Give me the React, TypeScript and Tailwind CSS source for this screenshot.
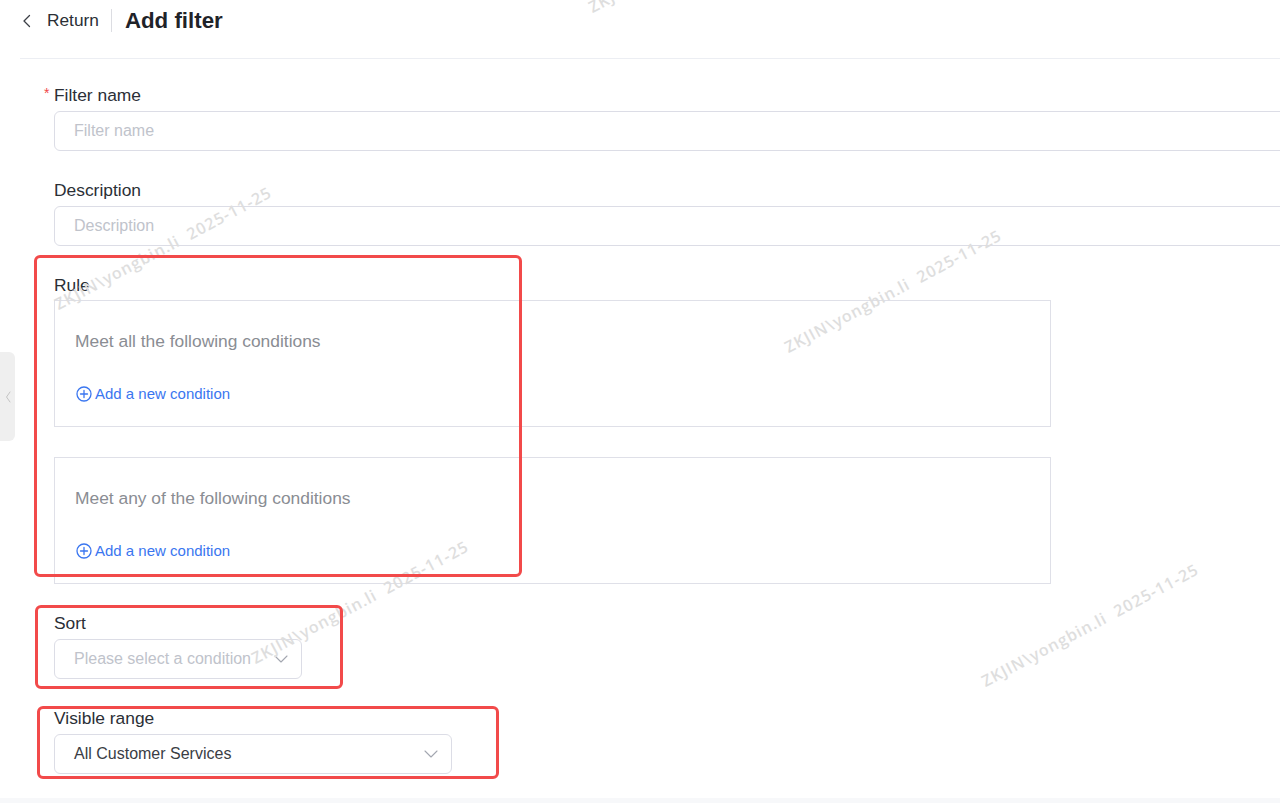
import React from "react";

const Chevron = ({ className = "" }: { className?: string }) => (
  <svg width="14" height="8" viewBox="0 0 14 8" className={className} fill="none">
    <path d="M1 1l6 6 6-6" stroke="#a3a7b0" strokeWidth="1.1" strokeLinecap="round" strokeLinejoin="round" />
  </svg>
);

const AddIcon = () => (
  <svg width="16" height="16" viewBox="0 0 16 16" fill="none">
    <circle cx="8" cy="8" r="7" stroke="#3a76f0" strokeWidth="1.3" />
    <path d="M8 4.5v7M4.5 8h7" stroke="#3a76f0" strokeWidth="1.3" strokeLinecap="round" />
  </svg>
);

const Label = ({ text, required }: { text: string; required?: boolean }) => (
  <div className="flex items-center h-[24px] mb-[4px] text-[17.4px] leading-[24px] text-[#2b2f36]">
    {required && <span className="-ml-[10px] w-[10px] text-[#f04848] text-[14px] self-start leading-[20px]">*</span>}
    <span>{text}</span>
  </div>
);

const ConditionBox = ({ title }: { title: string }) => (
  <div className="w-[997px] h-[127px] border border-[#dfe0e8] pl-[20px] pt-[28px] flex flex-col">
    <div className="text-[17.4px] leading-[24px] text-[#8a8d93]">{title}</div>
    <div className="mt-[31px] flex items-center gap-[3px] h-[20px] text-[15px] text-[#3a76f0]">
      <span className="ml-[1px] flex"><AddIcon /></span>
      <span>Add a new condition</span>
    </div>
  </div>
);

const Watermark = ({ cx, cy }: { cx: number; cy: number }) => (
  <div
    className="absolute w-[270px] h-[20px] flex items-center justify-center -rotate-[28deg] whitespace-pre text-[16px] tracking-[1px] font-semibold text-[#dedede] pointer-events-none"
    style={{ left: cx - 135, top: cy - 10, fontFamily: '"Open Sans", "Noto Sans", sans-serif' }}
  >
    {"ZKJIN\\yongbin.li  2025-11-25"}
  </div>
);

const RedBox = ({ l, t, w, h }: { l: number; t: number; w: number; h: number }) => (
  <div
    className="absolute border-[3px] border-[#f24a4a] rounded-[6px] pointer-events-none"
    style={{ left: l, top: t, width: w, height: h }}
  />
);

export default function App() {
  return (
    <div
      className="relative w-[1280px] h-[803px] overflow-hidden bg-white"
      style={{ fontFamily: '"Liberation Sans", Arial, sans-serif' }}
    >
      <div className="flex flex-col h-full">
        <div className="flex flex-col flex-1 pl-[20px]">
          {/* header */}
          <div className="h-[59px] border-b border-[#eceef3]">
            <div className="h-[41px] flex items-center">
              <svg width="10" height="14" viewBox="0 0 10 14" className="ml-[2px]" fill="none">
                <path d="M7.5 1.5L2 7l5.5 5.5" stroke="#3b3f46" strokeWidth="1.3" strokeLinecap="round" strokeLinejoin="round" />
              </svg>
              <span className="ml-[15px] text-[17.3px] text-[#2b2f36]">Return</span>
              <span className="ml-[12px] w-px h-[23px] bg-[#dcdde2]" />
              <span className="ml-[13px] text-[22.3px] font-bold text-[#1f2329]">Add filter</span>
            </div>
          </div>

          {/* form */}
          <div className="pl-[34px] pt-[24px] flex flex-col">
            <Label text="Filter name" required />
            <div className="w-[1240px] h-[40px] border border-[#dcdde6] rounded-[6px] flex items-center pl-[19px] text-[16px] text-[#c0c3cb]">
              Filter name
            </div>

            <div className="mt-[27px]">
              <Label text="Description" />
            </div>
            <div className="w-[1240px] h-[40px] border border-[#dcdde6] rounded-[6px] flex items-center pl-[19px] text-[16px] text-[#c0c3cb]">
              Description
            </div>

            <div className="mt-[27px]">
              <div className="h-[24px] mb-[3px] text-[17.4px] leading-[24px] text-[#2b2f36]">Rule</div>
            </div>
            <ConditionBox title="Meet all the following conditions" />
            <div className="mt-[30px]">
              <ConditionBox title="Meet any of the following conditions" />
            </div>

            <div className="mt-[27px]">
              <Label text="Sort" />
            </div>
            <div className="w-[248px] h-[40px] border border-[#dcdde6] rounded-[6px] flex items-center justify-between pl-[19px] pr-[13px] text-[16px] text-[#c0c3cb]">
              <span>Please select a condition</span>
              <Chevron />
            </div>

            <div className="mt-[27px]">
              <Label text="Visible range" />
            </div>
            <div className="w-[398px] h-[40px] border border-[#dcdde6] rounded-[6px] flex items-center justify-between pl-[19px] pr-[13px] text-[16px] text-[#3a3d44]">
              <span>All Customer Services</span>
              <Chevron />
            </div>
          </div>
        </div>
        <div className="h-[5px] bg-[#f7f8fa]" />
      </div>

      {/* left collapse tab */}
      <div className="absolute left-0 top-[352px] w-[15px] h-[89px] bg-[#efefef] rounded-r-[6px] flex items-center justify-center">
        <svg width="6" height="12" viewBox="0 0 6 12" fill="none">
          <path d="M5 1L1.5 6 5 11" stroke="#c4c4c4" strokeWidth="1" strokeLinecap="round" strokeLinejoin="round" />
        </svg>
      </div>

      {/* watermarks */}
      <Watermark cx={163} cy={248} />
      <Watermark cx={893} cy={291} />
      <Watermark cx={360} cy={602} />
      <Watermark cx={1090} cy={625} />
      <Watermark cx={697} cy={-49} />

      {/* red annotation boxes */}
      <RedBox l={34} t={255} w={488} h={322} />
      <RedBox l={35} t={605} w={308} h={84} />
      <RedBox l={37} t={706} w={462} h={73} />
    </div>
  );
}
